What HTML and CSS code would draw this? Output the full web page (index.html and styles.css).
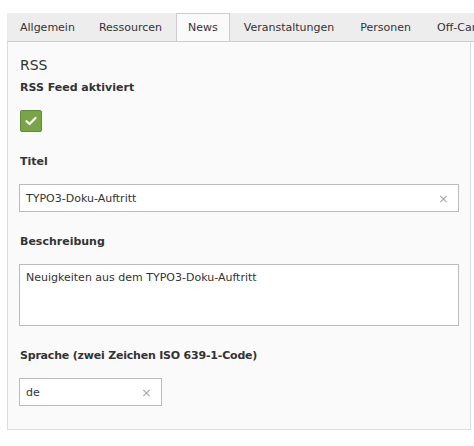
FILE: index.html
```html
<!DOCTYPE html>
<html lang="de">
<head>
<meta charset="utf-8">
<title>News</title>
<link rel="stylesheet" href="styles.css">
</head>
<body>
<div class="frame">
  <ul class="tabs">
    <li class="tab first">Allgemein</li>
    <li class="tab">Ressourcen</li>
    <li class="tab active">News</li>
    <li class="tab">Veranstaltungen</li>
    <li class="tab">Personen</li>
    <li class="tab">Off-Canvas</li>
  </ul>
  <div class="panel">
    <h2 class="section-title">RSS</h2>
    <div class="field">
      <div class="label">RSS Feed aktiviert</div>
      <span class="checkbox">
        <svg width="12" height="10" viewBox="0 0 12 10"><path d="M1.5 5.2 L4.6 8 L10.5 2" fill="none" stroke="#fff" stroke-width="2.2" stroke-linecap="round" stroke-linejoin="round"/></svg>
      </span>
    </div>
    <div class="field">
      <div class="label">Titel</div>
      <div class="input wide"><span class="value">TYPO3-Doku-Auftritt</span><span class="clear">×</span></div>
    </div>
    <div class="field">
      <div class="label">Beschreibung</div>
      <div class="textarea">Neuigkeiten aus dem TYPO3-Doku-Auftritt</div>
    </div>
    <div class="field last">
      <div class="label narrow">Sprache (zwei Zeichen ISO 639-1-Code)</div>
      <div class="input short"><span class="value">de</span><span class="clear">×</span></div>
    </div>
  </div>
</div>
</body>
</html>
```
FILE: styles.css
```css
html, body {
  margin: 0;
  padding: 0;
  background: #fff;
  overflow: hidden;
}
body {
  font-family: "DejaVu Sans", Verdana, sans-serif;
  font-size: 11px;
  color: #333;
}
.frame {
  margin: 13px 0 0 7px;
  width: 464px;
}
.tabs {
  display: flex;
  list-style: none;
  margin: 0 -10px 0 0;
  padding: 0;
  height: 28px;
  background: #ededed;
  border-bottom: 1px solid #cdcdcd;
  white-space: nowrap;
  overflow: hidden;
}
.tab {
  flex: none;
  padding: 0 12px;
  line-height: 27px;
  color: #333;
  border: 1px solid transparent;
  border-bottom: none;
}
.tab.first {
  padding-right: 10px;
}
.tab.active {
  background: #fafafa;
  border-color: #cdcdcd;
  padding: 0 11px;
  margin: 0 1px -1px;
  line-height: 28px;
}
.panel {
  background: #fafafa;
  border: 1px solid #dcdcdc;
  border-top: none;
  padding: 13px 12px 23px 11px;
}
.section-title {
  margin: 0 0 5px 1px;
  font-size: 14px;
  font-weight: normal;
  line-height: 20px;
  color: #333;
}
.field {
  margin-bottom: 22px;
}
.field.last {
  margin-bottom: 0;
}
.label {
  font-weight: bold;
  line-height: 16px;
  margin: 0 0 14px 1px;
  color: #333;
}
.label.narrow {
  letter-spacing: -0.2px;
}
.checkbox {
  display: flex;
  align-items: center;
  justify-content: center;
  width: 20px;
  height: 20px;
  background: #79a548;
  border: 1px solid #5e8c35;
  border-radius: 2px;
  margin-left: 1px;
}
.input {
  display: flex;
  align-items: center;
  justify-content: space-between;
  box-sizing: border-box;
  height: 28px;
  background: #fff;
  border: 1px solid #bbb;
  padding: 0 9px 0 6px;
}
.input.wide { width: 440px; }
.input.short { width: 143px; }
.value { color: #333; }
.clear {
  color: #a8a8a8;
  font-size: 13px;
}
.textarea {
  box-sizing: border-box;
  width: 440px;
  height: 62px;
  background: #fff;
  border: 1px solid #bbb;
  padding: 5px 6px;
  line-height: 16px;
}
```
